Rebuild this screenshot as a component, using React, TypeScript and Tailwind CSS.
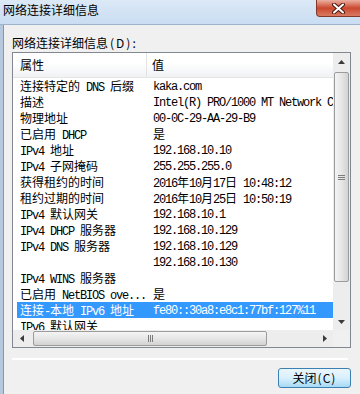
import React from 'react';

interface Row {
  prop: string;
  value: string;
  selected?: boolean;
}

const rows: Row[] = [
  { prop: '连接特定的 DNS 后缀', value: 'kaka.com' },
  { prop: '描述', value: 'Intel(R) PRO/1000 MT Network Connection' },
  { prop: '物理地址', value: '00-0C-29-AA-29-B9' },
  { prop: '已启用 DHCP', value: '是' },
  { prop: 'IPv4 地址', value: '192.168.10.10' },
  { prop: 'IPv4 子网掩码', value: '255.255.255.0' },
  { prop: '获得租约的时间', value: '2016年10月17日 10:48:12' },
  { prop: '租约过期的时间', value: '2016年10月25日 10:50:19' },
  { prop: 'IPv4 默认网关', value: '192.168.10.1' },
  { prop: 'IPv4 DHCP 服务器', value: '192.168.10.129' },
  { prop: 'IPv4 DNS 服务器', value: '192.168.10.129' },
  { prop: '', value: '192.168.10.130' },
  { prop: 'IPv4 WINS 服务器', value: '' },
  { prop: '已启用 NetBIOS ove...', value: '是' },
  { prop: '连接-本地 IPv6 地址', value: 'fe80::30a8:e8c1:77bf:127%11', selected: true },
  { prop: 'IPv6 默认网关', value: '' },
];

const cjk = "font-['Noto_Sans_CJK_SC','Noto_Sans',sans-serif]";
const mono = "font-['Liberation_Mono',monospace] tracking-[-1.2px]";

// SimSun-like look: CJK at 12px wide, latin at 6px per char
function Mixed({ text }: { text: string }) {
  const parts = text.split(/([\u4e00-\u9fff]+)/).filter(Boolean);
  return (
    <>
      {parts.map((p, i) =>
        /[\u4e00-\u9fff]/.test(p) ? (
          <span key={i} className={cjk}>{p}</span>
        ) : (
          <span key={i} className={mono}>{p}</span>
        )
      )}
    </>
  );
}

const Arrow = ({ dir }: { dir: 'up' | 'down' | 'left' | 'right' }) => {
  const paths = {
    up: 'M0 4 L3.5 0 L7 4 Z',
    down: 'M0 0 L7 0 L3.5 4 Z',
    left: 'M4 0 L4 7 L0 3.5 Z',
    right: 'M0 0 L4 3.5 L0 7 Z',
  };
  const vertical = dir === 'up' || dir === 'down';
  return (
    <svg width={vertical ? 7 : 4} height={vertical ? 4 : 7} viewBox={vertical ? '0 0 7 4' : '0 0 4 7'}>
      <path d={paths[dir]} fill="#3b3b3b" />
    </svg>
  );
};

const App: React.FC = () => {
  return (
    <div className="w-[360px] h-[394px] overflow-hidden flex flex-col bg-[#f0f0f0] select-none text-black">
      {/* Title bar */}
      <div className="h-[25px] shrink-0 flex items-start bg-gradient-to-b from-[#dce9f6] to-[#c9ddf2] border-b border-[#9db3cc]">
        <span className={`pl-[3px] pt-[2px] text-[12px] leading-[16px] ${cjk}`}>网络连接详细信息</span>
        <div className="ml-auto mr-[-6px] w-[50px] h-[17px] rounded-b-[4px] border border-t-0 border-[#83392a] bg-gradient-to-b from-[#eab0a2] via-[#c9472d] to-[#d97a61] flex items-center justify-center">
          <svg width="13" height="11" viewBox="0 0 13 11" className="mr-[6px]">
            <path d="M2 1.5 L11 9.5 M11 1.5 L2 9.5" stroke="#4a1a10" strokeWidth="4" strokeLinecap="round" />
            <path d="M2 1.5 L11 9.5 M11 1.5 L2 9.5" stroke="#ffffff" strokeWidth="2" strokeLinecap="round" />
          </svg>
        </div>
      </div>

      <div className="flex flex-1">
        {/* Window frame */}
        <div className="w-[4px] bg-[#b6c8de] border-r border-[#8798ae]" />

        <div className="flex-1 flex flex-col pl-[8px] pt-[10px]">
          <div className={`h-[16px] leading-[16px] text-[12px] ${cjk}`}>
            网络连接详细信息<span className="tracking-[2px] pl-[2px]">(D):</span>
          </div>

          {/* List view */}
          <div className="mt-[1px] w-[339px] h-[296px] border border-[#828790] bg-white flex flex-col">
            <div className="flex h-[277px]">
              <div className="w-[320px] overflow-hidden">
                {/* Header */}
                <div className="h-[25px] flex bg-gradient-to-b from-white from-40% to-[#f1f2f4] border-b border-[#e5e5e5]">
                  <div className={`w-[134px] pl-[7px] leading-[24px] text-[12px] border-r border-[#e3e3e3] ${cjk}`}>属性</div>
                  <div className={`pl-[5px] leading-[24px] text-[12px] ${cjk}`}>值</div>
                </div>
                {/* Rows */}
                <div className="pl-[4px] text-[12px]">
                  {rows.map((r, i) => (
                    <div
                      key={i}
                      className={`h-[16px] leading-[16px] flex whitespace-nowrap ${r.selected ? 'bg-[#3399ff] text-white' : ''}`}
                    >
                      <div className="w-[136px] shrink-0 pl-[3px] overflow-hidden">
                        <Mixed text={r.prop} />
                      </div>
                      <div>
                        <Mixed text={r.value} />
                      </div>
                    </div>
                  ))}
                </div>
              </div>

              {/* Vertical scrollbar */}
              <div className="w-[17px] flex flex-col bg-[#ededed]">
                <div className="h-[17px] flex items-center justify-center">
                  <Arrow dir="up" />
                </div>
                <div className="flex-1 pt-[2px] px-[1px]">
                  <div className="h-[210px] rounded-[2px] border border-[#9c9c9c] bg-gradient-to-r from-[#f4f4f4] via-[#e6e6e6] to-[#d2d2d2] flex flex-col items-center justify-center gap-[1px]">
                    <div className="w-[7px] h-[1px] bg-[#7c7c7c]" />
                    <div className="w-[7px] h-[1px] bg-[#7c7c7c]" />
                    <div className="w-[7px] h-[1px] bg-[#7c7c7c]" />
                  </div>
                </div>
                <div className="h-[17px] flex items-center justify-center">
                  <Arrow dir="down" />
                </div>
              </div>
            </div>

            {/* Horizontal scrollbar */}
            <div className="flex h-[17px]">
              <div className="w-[320px] flex items-center bg-[#ededed]">
                <div className="w-[17px] h-[17px] flex items-center justify-center">
                  <Arrow dir="left" />
                </div>
                <div className="ml-[3px] w-[234px] h-[15px] rounded-[2px] border border-[#9c9c9c] bg-gradient-to-b from-[#f4f4f4] via-[#e6e6e6] to-[#d2d2d2] flex items-center justify-center gap-[1px]">
                  <div className="w-[1px] h-[7px] bg-[#7c7c7c]" />
                  <div className="w-[1px] h-[7px] bg-[#7c7c7c]" />
                  <div className="w-[1px] h-[7px] bg-[#7c7c7c]" />
                </div>
                <div className="ml-auto w-[17px] h-[17px] flex items-center justify-center">
                  <Arrow dir="right" />
                </div>
              </div>
              <div className="w-[17px] bg-[#f0f0f0]" />
            </div>
          </div>

          {/* Separator */}
          <div className="mt-[10px] w-[336px] h-[2px] border-t border-[#a0a0a0] border-b border-white" />

          {/* Button */}
          <div className="flex justify-end pr-[9px] mt-[8px]">
            <button
              className={`w-[73px] h-[20px] rounded-[3px] border border-[#3c7fb1] bg-gradient-to-b from-[#eaf6fd] via-[#d9f0fc] to-[#a7d9f5] text-[12px] leading-[18px] ${cjk}`}
            >
              关闭<span className="tracking-[1px] pl-[1px]">(C)</span>
            </button>
          </div>
        </div>
      </div>
    </div>
  );
};

export default App;
